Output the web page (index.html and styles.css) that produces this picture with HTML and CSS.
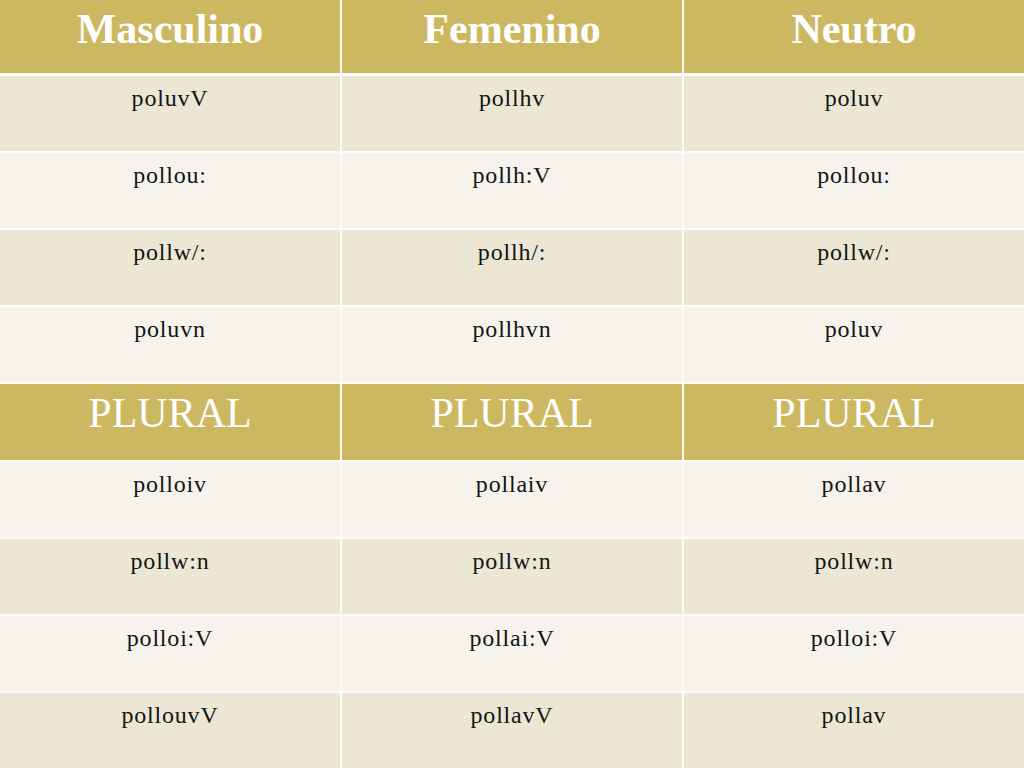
FILE: index.html
```html
<!DOCTYPE html>
<html lang="es">
<head>
<meta charset="utf-8">
<title>Declinación de polús</title>
<link rel="stylesheet" href="styles.css">
</head>
<body>
<div class="table">
  <div class="cell head bold">Masculino</div>
  <div class="cell head bold">Femenino</div>
  <div class="cell head bold">Neutro</div>

  <div class="cell dark">poluvV</div>
  <div class="cell dark">pollhv</div>
  <div class="cell dark">poluv</div>

  <div class="cell light">pollou:</div>
  <div class="cell light">pollh:V</div>
  <div class="cell light">pollou:</div>

  <div class="cell dark">pollw/:</div>
  <div class="cell dark">pollh/:</div>
  <div class="cell dark">pollw/:</div>

  <div class="cell light">poluvn</div>
  <div class="cell light">pollhvn</div>
  <div class="cell light">poluv</div>

  <div class="cell head">PLURAL</div>
  <div class="cell head">PLURAL</div>
  <div class="cell head">PLURAL</div>

  <div class="cell light">polloiv</div>
  <div class="cell light">pollaiv</div>
  <div class="cell light">pollav</div>

  <div class="cell dark">pollw:n</div>
  <div class="cell dark">pollw:n</div>
  <div class="cell dark">pollw:n</div>

  <div class="cell light">polloi:V</div>
  <div class="cell light">pollai:V</div>
  <div class="cell light">polloi:V</div>

  <div class="cell dark">pollouvV</div>
  <div class="cell dark">pollavV</div>
  <div class="cell dark">pollav</div>
</div>
</body>
</html>
```

FILE: styles.css
```css
html, body {
  margin: 0;
  padding: 0;
  background: #ffffff;
}

.table {
  width: 1024px;
  height: 768px;
  display: grid;
  grid-template-columns: repeat(3, 1fr);
  grid-template-rows: 74px repeat(9, 1fr);
  column-gap: 2px;
  row-gap: 2px;
  background: #fdfcf7;
  box-sizing: border-box;
  font-family: "Liberation Serif", "Times New Roman", serif;
}

.cell {
  text-align: center;
  color: #141414;
  font-size: 24px;
  line-height: 28px;
  padding-top: 8px;
  letter-spacing: 0.8px;
  box-sizing: border-box;
}

.table > .cell:nth-child(-n+3) {
  margin-bottom: 1px;
}

.head {
  background: #cdb862;
  color: #ffffff;
  font-size: 42px;
  line-height: 48px;
  padding-top: 5px;
  letter-spacing: 0;
}

.bold {
  font-weight: bold;
}

.dark {
  background: #ece6d4;
}

.light {
  background: #f5f3ec;
}
```
